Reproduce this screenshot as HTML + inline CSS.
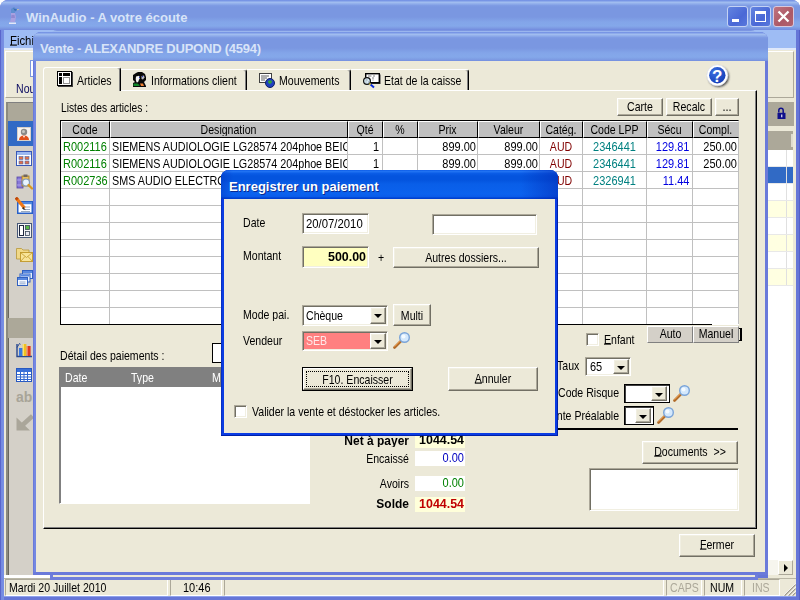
<!DOCTYPE html>
<html lang="fr">
<head>
<meta charset="utf-8">
<title>WinAudio - A votre écoute</title>
<style>
*{box-sizing:border-box;margin:0;padding:0}
html,body{width:800px;height:600px;overflow:hidden;background:#fff}
body{position:relative;font-family:"Liberation Sans",sans-serif;font-size:11px;color:#000}
.a{position:absolute}
.t{position:absolute;white-space:nowrap;font-size:11px;line-height:14px;height:14px;transform:scale(.96,1.13);transform-origin:0 50%}
.tr{text-align:right;transform-origin:100% 50%}
.tc{text-align:center;transform-origin:50% 50%}
.n{transform:scale(1,1.13)}
.b{transform:scale(1.09,1.13)}
.b.n{transform:scale(1.13,1.13)}
.b{font-weight:bold}
u{text-decoration:underline;text-underline-offset:.4px;text-decoration-thickness:1px}
.cap{position:absolute;white-space:nowrap;font-weight:bold;font-size:13px;line-height:16px;color:#d8e4f8}
.sunk{position:absolute;border:1px solid;border-color:#aca899 #fff #fff #aca899;box-shadow:inset 1px 1px 0 #716f64,inset -1px -1px 0 #f1efe2;background:#fff}
.btn{position:absolute;border:1px solid;border-color:#fff #716f64 #716f64 #fff;box-shadow:inset -1px -1px 0 #aca899,inset 1px 1px 0 #f1efe2;background:#ece9d8}
.dd{position:absolute;width:16px;border:1px solid;border-color:#fff #716f64 #716f64 #fff;box-shadow:inset -1px -1px 0 #aca899,inset 1px 1px 0 #f1efe2;background:#ece9d8}
.dd:after{content:"";position:absolute;left:3px;top:6px;border:4px solid transparent;border-top-color:#000;border-bottom:0}
.hl{position:absolute;height:1px;background:#c0c0c0}
.vl{position:absolute;width:1px;background:#c0c0c0}
.hc{position:absolute;top:121px;height:17px;background:#c0c0c0;border:1px solid;border-color:#fff #000 #000 #fff}
</style>
</head>
<body>
<!-- ================= MAIN WINDOW ================= -->
<div class="a" id="mainframe" style="left:0;top:0;width:800px;height:600px;background:#6676d7;border-radius:8px 8px 0 0"></div>
<div class="a" style="left:0;top:20px;width:4px;height:580px;background:linear-gradient(to right,#5a66cc 0,#5a66cc 1px,#758ae1 1.500px,#7890e4 4px)"></div>
<div class="a" style="left:4px;top:596px;width:792px;height:1px;background:#8fa2ec"></div>
<div class="a" style="left:799px;top:20px;width:1px;height:580px;background:#5560c8"></div>
<div class="a" id="maintitle" style="left:0;top:0;width:800px;height:30px;border-radius:8px 8px 0 0;background:linear-gradient(to bottom,#6c8ae2 0,#8eabeb 1.500px,#a0bcef 2.500px,#94b1ec 3.500px,#7f9ce4 5.500px,#7a97e1 7px,#7a97e1 17px,#83a5e9 22px,#84a8ea 26px,#7d9be3 28px,#718ade 30px)"></div>
<div class="cap" style="left:26px;top:9.5px">WinAudio - A votre écoute</div>
<!-- app icon -->
<svg class="a" style="left:8px;top:7px" width="12" height="18" viewBox="0 0 12 18"><path d="M3 2l3-2 2 1.500 3 .500-2.500 2-1.500 1v2l-4 0z" fill="#5f8fd0"/><path d="M5 1l2 1 2 .500-2 1.500z" fill="#3868b0"/><path d="M9 2l2.500 .2-2 1.300z" fill="#d8c8a0"/><path d="M3 6h4l1 4-1 5h-5l1-4z" fill="#a8a0e0"/><path d="M3.500 8h3l.5 3h-4z" fill="#9088d0"/><path d="M1 15.500h7v1.500H1z" fill="#e4e8f8"/></svg>
<!-- caption buttons -->
<div class="a" style="left:727px;top:6px;width:21px;height:21px;border:1px solid #c4d2f4;border-radius:3px;background:linear-gradient(135deg,#6384e0,#4a68d6 60%,#5878dc)"></div>
<div class="a" style="left:732px;top:18.500px;width:7px;height:3px;background:#fff"></div>
<div class="a" style="left:750px;top:6px;width:21px;height:21px;border:1px solid #c4d2f4;border-radius:3px;background:linear-gradient(135deg,#6384e0,#4a68d6 60%,#5878dc)"></div>
<div class="a" style="left:755px;top:11px;width:11px;height:11px;border:1px solid #fff;border-top-width:3px"></div>
<div class="a" style="left:773px;top:6px;width:21px;height:21px;border:1px solid #d8c8dc;border-radius:3px;background:linear-gradient(135deg,#c07480,#ac5866 60%,#b2626e)"></div>
<svg class="a" style="left:773px;top:6px" width="21" height="21"><path d="M5.500 5.500l10 10M15.500 5.500l-10 10" stroke="#fff" stroke-width="2.300" fill="none"/></svg>
<!-- menu bar -->
<div class="a" style="left:4px;top:30px;width:792px;height:19px;background:#9ebcf4"></div>
<div class="a" style="left:4px;top:48px;width:792px;height:2px;background:#dfe8fa"></div>
<div class="t" style="left:10px;top:32.500px;transform:scale(1.03,1.13)"><u>F</u>ichier</div>
<!-- toolbar -->
<div class="a" style="left:4px;top:50px;width:792px;height:53px;background:#ece9d8"></div>
<div class="a" style="left:5px;top:51px;width:789px;height:47px;border:1px solid;border-color:#fff #aca899 #aca899 #fff"></div>
<div class="a" style="left:30px;top:60px;width:12px;height:17px;border:1px solid #7a96df;background:#fff"></div>
<div class="t" style="left:16px;top:80.500px;color:#0a0a60">Nouveau</div>
<!-- left pane -->
<div class="a" style="left:4px;top:98px;width:30px;height:480px;background:#ece9d8"></div>
<div class="a" style="left:6px;top:102px;width:31px;height:473px;background:#d4d0c8;border-left:2px solid #716f64;border-left-color:#8c8a7e;border-top:1px solid #808080;box-shadow:inset 1px 0 0 #6a685e"></div>
<div class="a" style="left:4px;top:575px;width:50px;height:3px;background:#fff"></div>
<div class="a" style="left:8px;top:103px;width:30px;height:18px;background:#aca899"></div>
<div class="a" style="left:8px;top:121px;width:30px;height:25px;background:#316ac5"></div>
<div class="a" style="left:8px;top:318px;width:30px;height:20px;background:#aca899"></div>

<!-- left pane icons -->
<svg class="a" style="left:17px;top:127px" width="14" height="14" viewBox="0 0 14 14"><rect width="14" height="14" fill="#fff"/><rect x="0.500" y="0.500" width="13" height="13" fill="#f8f4f0" stroke="#d8d0c8"/><circle cx="7" cy="5" r="3.200" fill="#8a8a88"/><circle cx="6.500" cy="4.500" r="1.500" fill="#c8c8c4"/><path d="M2 13c0-3 2-4.500 5-4.500s5 1.500 5 4.500z" fill="#e0501c"/><path d="M6 9l1 2 1-2z" fill="#fff"/></svg>
<svg class="a" style="left:16px;top:151px" width="16" height="15" viewBox="0 0 16 15"><rect x="0.500" y="0.500" width="15" height="14" fill="#fff" stroke="#3858b8"/><rect x="1" y="1" width="14" height="3" fill="#9cb8f0"/><rect x="3" y="5.500" width="4" height="3" fill="#e07048" stroke="#4868b0" stroke-width=".6"/><rect x="9" y="5.500" width="4" height="3" fill="#e07048" stroke="#4868b0" stroke-width=".6"/><rect x="3" y="10" width="4" height="3" fill="#e07048" stroke="#4868b0" stroke-width=".6"/><rect x="9" y="10" width="4" height="3" fill="#e07048" stroke="#4868b0" stroke-width=".6"/></svg>
<svg class="a" style="left:16px;top:174px" width="17" height="16" viewBox="0 0 17 16"><rect x="1" y="3" width="6" height="11" fill="#8878d8" stroke="#5848a8" stroke-width=".8"/><path d="M1 6h6M1 11h6" stroke="#b8b0f0" stroke-width=".8"/><rect x="6" y="2" width="7" height="10" fill="#e8c060" stroke="#a07820" stroke-width=".8"/><rect x="7.500" y="0.500" width="4" height="2.500" fill="#706860"/><circle cx="10" cy="8.500" r="3.500" fill="#e8f4ff" stroke="#8098b8" stroke-width="1.200"/><path d="M12.500 11l3.500 3.500" stroke="#d89820" stroke-width="2.200" stroke-linecap="round"/></svg>
<svg class="a" style="left:15px;top:197px" width="18" height="17" viewBox="0 0 18 17"><rect x="2.750" y="4.750" width="14.500" height="11.500" fill="#fff" stroke="#2860c8" stroke-width="1.500"/><rect x="3" y="5" width="14" height="2.200" fill="#5088e0"/><path d="M8 10h7M8 12.500h7M6 14.500h9" stroke="#90a0b8" stroke-width=".9"/><path d="M1.500 1.500L9.500 11" stroke="#f07818" stroke-width="3.200" stroke-linecap="butt"/><path d="M8.300 9.800l2.600 3.400-3.900-1.700z" fill="#403020"/><path d="M0.800 0.600l1.800 2" stroke="#c04808" stroke-width="3"/></svg>
<svg class="a" style="left:17px;top:223px" width="15" height="15" viewBox="0 0 15 15"><rect x="0.500" y="0.500" width="14" height="14" fill="#f4f4f4" stroke="#485878"/><rect x="2.500" y="2.500" width="4" height="10" fill="#fff" stroke="#202840"/><rect x="8.500" y="2.500" width="4" height="4" fill="#58b848" stroke="#384858" stroke-width=".8"/><rect x="8.500" y="8.500" width="4" height="4" fill="#e8e8f0" stroke="#384858" stroke-width=".8"/></svg>
<svg class="a" style="left:16px;top:246px" width="17" height="17" viewBox="0 0 17 17"><path d="M0.500 2.500h5l1.500 1.500h6v9h-12.500z" fill="#f0d888" stroke="#b89838" stroke-width=".8"/><rect x="4.500" y="6.500" width="12" height="9" fill="#f8e498" stroke="#c09828" stroke-width=".9"/><path d="M4.500 6.500l6 5 6-5M4.500 15.500l4.500-5M16.500 15.500l-4.500-5" stroke="#c09828" stroke-width=".8" fill="none"/></svg>
<svg class="a" style="left:17px;top:270px" width="16" height="16" viewBox="0 0 16 16"><rect x="5.500" y="0.500" width="10" height="8" fill="#e8f0fc" stroke="#3060c0"/><rect x="6" y="1" width="9" height="2" fill="#5888e0"/><rect x="3" y="4" width="10" height="8" fill="#e8f0fc" stroke="#3060c0"/><rect x="3.500" y="4.500" width="9" height="2" fill="#5888e0"/><rect x="0.500" y="7.500" width="10" height="8" fill="#f4f8ff" stroke="#3060c0"/><rect x="1" y="8" width="9" height="2" fill="#5888e0"/><path d="M2.500 12h6M2.500 13.800h6" stroke="#8098c0" stroke-width=".8"/></svg>
<svg class="a" style="left:16px;top:342px" width="17" height="16" viewBox="0 0 17 16"><path d="M1 2v12.500h15" stroke="#284890" stroke-width="1.400" fill="none"/><path d="M1 5.500l2.500-4 1 .8" stroke="#284890" stroke-width="1" fill="none"/><rect x="3" y="6" width="3.600" height="8" fill="#3878e0"/><rect x="6.800" y="2" width="3.600" height="12" fill="#f0c020"/><rect x="6.800" y="2" width="1.200" height="12" fill="#f8e070"/><rect x="10.800" y="4" width="3.800" height="10" fill="#e03820"/><rect x="10.800" y="4" width="1.200" height="10" fill="#f08060"/></svg>
<svg class="a" style="left:16px;top:368px" width="16" height="14" viewBox="0 0 16 14"><rect x="0.500" y="0.500" width="15" height="13" fill="#fff" stroke="#2858c0"/><rect x="1" y="1" width="14" height="3" fill="#3870d8"/><path d="M1 6.500h14M1 9h14M1 11.500h14M4.500 4v9.500M8 4v9.500M11.500 4v9.500" stroke="#3068d0" stroke-width="1"/></svg>
<div class="t b" style="left:16px;top:390px;color:#a8a498;font-size:14px;transform:none;letter-spacing:0">ab|</div>
<svg class="a" style="left:16px;top:414px" width="18" height="17" viewBox="0 0 18 17"><path d="M16.500 2L6 11.500" stroke="#aaa69a" stroke-width="4.600"/><path d="M0.500 3.500v13h13.500z" fill="#aaa69a"/></svg>
<!-- right strip (main window content behind) -->
<div class="a" style="left:768px;top:98px;width:28px;height:480px;background:#ece9d8"></div>
<div class="a" style="left:768px;top:102px;width:26px;height:24px;background:#aca899"></div>
<div class="a" style="left:768px;top:131px;width:25px;height:443px;background:#fff"></div>
<div class="a" style="left:768px;top:131px;width:25px;height:19px;background:#aca899"></div>
<div class="a" style="left:768px;top:166px;width:25px;height:17px;background:#316ac5"></div>
<div class="a" style="left:768px;top:200px;width:25px;height:17px;background:#ffffe1"></div>
<div class="a" style="left:768px;top:234px;width:25px;height:17px;background:#ffffe1"></div>
<div class="a" style="left:768px;top:268px;width:25px;height:17px;background:#ffffe1"></div>
<div class="a" style="left:786px;top:150px;width:1px;height:135px;background:#e0e0e0"></div>
<div class="a" style="left:768px;top:166px;width:25px;height:1px;background:#e8e8e8"></div>
<div class="a" style="left:768px;top:183px;width:25px;height:1px;background:#e8e8e8"></div>
<div class="a" style="left:768px;top:200px;width:25px;height:1px;background:#e8e8e8"></div>
<div class="a" style="left:768px;top:217px;width:25px;height:1px;background:#e8e8e8"></div>
<div class="a" style="left:768px;top:234px;width:25px;height:1px;background:#e8e8e8"></div>
<div class="a" style="left:768px;top:251px;width:25px;height:1px;background:#e8e8e8"></div>
<div class="a" style="left:768px;top:268px;width:25px;height:1px;background:#e8e8e8"></div>
<div class="a" style="left:768px;top:285px;width:25px;height:1px;background:#e8e8e8"></div>
<div class="a" style="left:791px;top:134px;width:2px;height:13px;background:#e0ddd0"></div>
<svg class="a" style="left:776px;top:107px" width="11" height="13" viewBox="0 0 11 13"><path d="M2.800 5.500V3.500a2.200 2.200 0 0 1 4.400 0v2.500" stroke="#10108a" stroke-width="1.500" fill="none"/><rect x="1.500" y="5.800" width="8" height="6.200" fill="#10108a"/><rect x="5" y="7.500" width="1.400" height="2.800" fill="#c8c8e8"/></svg>
<div class="a" style="left:768px;top:560px;width:10px;height:15px;background:#f6f5ee"></div>
<div class="a" style="left:778px;top:560px;width:15px;height:15px;background:#ece9d8;border:1px solid;border-color:#fff #aca899 #aca899 #fff"></div>
<div class="a" style="left:783.500px;top:563.500px;width:0;height:0;border:4px solid transparent;border-left:4.500px solid #000;border-right:0"></div>
<div class="a" style="left:768px;top:575px;width:28px;height:3px;background:#ece9d8"></div>
<!-- status bar -->
<div class="a" style="left:4px;top:578px;width:792px;height:18px;background:#ece9d8;border-top:1px solid #bab7a6"></div>
<div class="a" style="left:5px;top:579px;width:163px;height:17px;border:1px solid;border-color:#aca899 #fff #fff #aca899"></div>
<div class="a" style="left:170px;top:579px;width:52px;height:17px;border:1px solid;border-color:#aca899 #fff #fff #aca899"></div>
<div class="a" style="left:224px;top:579px;width:440px;height:17px;border:1px solid;border-color:#aca899 #fff #fff #aca899"></div>
<div class="a" style="left:666px;top:579px;width:36px;height:17px;border:1px solid;border-color:#aca899 #fff #fff #aca899"></div>
<div class="a" style="left:704px;top:579px;width:38px;height:17px;border:1px solid;border-color:#aca899 #fff #fff #aca899"></div>
<div class="a" style="left:744px;top:579px;width:36px;height:17px;border:1px solid;border-color:#aca899 #fff #fff #aca899"></div>
<svg class="a" style="left:783px;top:583px" width="13" height="13"><path d="M12.500 1.500L1.500 12.500M12.500 5.500L5.500 12.500M12.500 9.500L9.500 12.500" stroke="#a09c8c" stroke-width="1.500"/><path d="M12.500 0.500L0.500 12.500M12.500 4.500L4.500 12.500M12.500 8.500L8.500 12.500" stroke="#fff" stroke-width=".8"/></svg>
<div class="t" style="left:9px;top:580px">Mardi 20 Juillet 2010</div>
<div class="t n" style="left:183px;top:580px">10:46</div>
<div class="t" style="left:670px;top:580px;color:#aca899">CAPS</div>
<div class="t" style="left:710px;top:580px">NUM</div>
<div class="t" style="left:752px;top:580px;color:#aca899">INS</div>

<!-- ================= WINDOW BEHIND ================= -->
<div class="a" style="left:50px;top:30px;width:708px;height:550px;background:linear-gradient(to bottom,#6c86dc 0,#9ab6ee 1.500px,#9ab6ee 3px,#6e7edb 4px);border-radius:7px 7px 0 0"></div>
<div class="a" style="left:53px;top:560px;width:702px;height:17px;background:#ece9d8"></div>

<!-- ================= VENTE WINDOW ================= -->
<div class="a" id="vente" style="left:33px;top:32px;width:735px;height:543px;background:#6a7ada;border-radius:8px 8px 0 0"></div>
<div class="a" style="left:34px;top:50px;width:2px;height:522px;background:#7488e2"></div>
<div class="a" style="left:33px;top:32px;width:735px;height:29px;border-radius:8px 8px 0 0;background:linear-gradient(to bottom,#6c8ae2 0,#8eabeb 1.500px,#a0bcef 2.500px,#94b1ec 3.500px,#7f9ce4 5.500px,#7a97e1 7px,#7a97e1 16px,#83a5e9 21px,#84a8ea 25px,#7d9be3 27.500px,#758fe0 29px)"></div>
<div class="cap" style="left:40px;top:40.500px;letter-spacing:-0.22px">Vente - ALEXANDRE DUPOND (4594)</div>
<div class="a" id="vclient" style="left:36px;top:61px;width:729px;height:511px;background:#ece9d8"></div>

<!-- tab page -->
<div class="a" style="left:43px;top:90px;width:714px;height:439px;border:1px solid;border-color:#fff #000 #000 #fff;box-shadow:inset -1px -1px 0 #808080"></div>
<!-- tabs -->
<div class="a" style="left:43px;top:67px;width:78px;height:24px;background:#ece9d8;border:1px solid;border-color:#fff #000 transparent #fff;border-bottom:0;border-radius:3px 3px 0 0;box-shadow:inset -1px 0 0 #808080"></div>
<div class="a" style="left:121px;top:69px;width:126px;height:21px;border:1px solid;border-color:#fff #000 transparent transparent;border-bottom:0;border-left:0;border-radius:0 3px 0 0;box-shadow:inset -1px 0 0 #808080"></div>
<div class="a" style="left:247px;top:69px;width:104px;height:21px;border:1px solid;border-color:#fff #000 transparent transparent;border-bottom:0;border-left:0;border-radius:0 3px 0 0;box-shadow:inset -1px 0 0 #808080"></div>
<div class="a" style="left:351px;top:69px;width:118px;height:21px;border:1px solid;border-color:#fff #000 transparent transparent;border-bottom:0;border-left:0;border-radius:0 3px 0 0;box-shadow:inset -1px 0 0 #808080"></div>
<div class="t" style="left:77px;top:72.5px">Articles</div>
<div class="t" style="left:151px;top:73px">Informations client</div>
<div class="t" style="left:279px;top:73px">Mouvements</div>
<div class="t" style="left:384px;top:73px">Etat de la caisse</div>
<!-- tab icons -->
<svg class="a" style="left:57px;top:71px" width="17" height="17" viewBox="0 0 17 17" shape-rendering="crispEdges"><rect x="15" y="1" width="1" height="15" fill="#404040"/><rect x="1" y="15" width="15" height="1" fill="#404040"/><rect width="15" height="15" fill="#000"/><rect x="1" y="1" width="13" height="13" fill="#fff"/><rect x="2" y="2" width="3" height="3" fill="#000"/><rect x="6" y="2" width="7" height="3" fill="#000"/><rect x="2" y="6" width="3" height="7" fill="#000"/><rect x="6" y="6" width="7" height="7" fill="#909090"/><rect x="7" y="7" width="5" height="5" fill="#fff"/></svg>
<svg class="a" style="left:132px;top:71px" width="16" height="17" viewBox="0 0 16 17"><path d="M1 4l3-2 2-1h4l3 2 1 3v3l-2 2 2 4 0 1H1v-4l2-1-2-2z" fill="#080808"/><path d="M4 5.500l3-.8 1 2 -1 2 -1 2.500h-1.500l-.8-3z" fill="#f4f4f4"/><path d="M9.500 5l2.500-.5.500 2-1.500 2-1.500-.5z" fill="#b8b8c0"/><rect x="7" y="6" width="1" height="1" fill="#2030c0"/><rect x="10" y="5" width="1" height="1" fill="#2030c0"/><path d="M1.500 12.500h4l2 1.500v1H1.500z" fill="#108828"/><path d="M8 12.500h3l1 2.500h-3z" fill="#f08030"/></svg>
<svg class="a" style="left:259px;top:72px" width="17" height="16" viewBox="0 0 17 16"><rect x="0.5" y="1.5" width="12" height="9" fill="#fff" stroke="#404040"/><path d="M2 4h8M2 6h6M2 8h4" stroke="#606060"/><circle cx="11" cy="11" r="4.5" fill="#2040c0" stroke="#102060"/><path d="M9 9c1-1 3-1 4 0 0 2-1 2-2 3-1 0-2-1-2-3z" fill="#30a040"/></svg>
<svg class="a" style="left:362px;top:72px" width="19" height="17" viewBox="0 0 19 17"><rect x="4.500" y="2.500" width="14" height="9.500" fill="#303030"/><rect x="3.700" y="1.700" width="13.600" height="9" fill="#fff" stroke="#000" stroke-width="1.400"/><path d="M6 4h3.500M11 4h2M10 6h2M10.500 8h1" stroke="#808080" stroke-width="1"/><circle cx="5" cy="9" r="3.400" fill="#d8ecf8" stroke="#101010" stroke-width="1.200"/><path d="M3.500 8h2M3.500 10h1M6 10h1.500" stroke="#909090" stroke-width=".9"/><path d="M8 12l4 3.500" stroke="#0828d8" stroke-width="2"/><rect x="7.300" y="11.300" width="1.500" height="1.500" fill="#f0d820"/></svg>
<!-- help icon -->
<svg class="a" style="left:704px;top:62px" width="28" height="28" viewBox="0 0 28 28"><defs><radialGradient id="hg" cx="0.35" cy="0.3" r="0.9"><stop offset="0" stop-color="#3c70e0"/><stop offset="1" stop-color="#0c34b0"/></radialGradient><filter id="hb" x="-20%" y="-20%" width="140%" height="140%"><feGaussianBlur stdDeviation="0.8"/></filter></defs><circle cx="14.600" cy="14.800" r="10.300" fill="#404040" filter="url(#hb)"/><circle cx="13.300" cy="13.300" r="10.500" fill="#fff" stroke="#dfe3ee" stroke-width=".8"/><circle cx="13.300" cy="13.300" r="8.200" fill="url(#hg)"/><text x="13.300" y="19.500" font-family="Liberation Sans,sans-serif" font-weight="bold" font-size="17" fill="#fff" text-anchor="middle">?</text></svg>
<div class="t" style="left:61px;top:100px;transform:scale(.93,1.13)">Listes des articles :</div>
<!-- top buttons -->
<div class="btn" style="left:617px;top:98px;width:46px;height:18px"></div><div class="t tc" style="left:617px;top:99px;width:46px">Carte</div>
<div class="btn" style="left:666px;top:98px;width:46px;height:18px"></div><div class="t tc" style="left:666px;top:99px;width:46px">Recalc</div>
<div class="btn" style="left:715px;top:98px;width:24px;height:18px"></div><div class="t tc n" style="left:715px;top:99px;width:24px">...</div>
<!-- grid -->
<div class="a" style="left:60px;top:120px;width:679px;height:205px;background:#fff;border:1px solid #000;border-right-color:#c0c0c0"></div>
<div class="hc" style="left:61px;width:49px"></div><div class="t tc" style="left:61px;top:122px;width:48px">Code</div>
<div class="hc" style="left:110px;width:238px"></div><div class="t tc" style="left:110px;top:122px;width:237px">Designation</div>
<div class="hc" style="left:348px;width:35px"></div><div class="t tc" style="left:348px;top:122px;width:34px">Qté</div>
<div class="hc" style="left:383px;width:35px"></div><div class="t tc" style="left:383px;top:122px;width:34px">%</div>
<div class="hc" style="left:418px;width:60px"></div><div class="t tc" style="left:418px;top:122px;width:59px">Prix</div>
<div class="hc" style="left:478px;width:62px"></div><div class="t tc" style="left:478px;top:122px;width:61px">Valeur</div>
<div class="hc" style="left:540px;width:43px"></div><div class="t tc" style="left:540px;top:122px;width:42px">Catég.</div>
<div class="hc" style="left:583px;width:64px"></div><div class="t tc" style="left:583px;top:122px;width:63px">Code LPP</div>
<div class="hc" style="left:647px;width:46px"></div><div class="t tc" style="left:647px;top:122px;width:45px">Sécu</div>
<div class="hc" style="left:693px;width:46px;border-right-color:#c0c0c0"></div><div class="t tc" style="left:693px;top:122px;width:45px">Compl.</div>
<div class="hl" style="left:61px;top:154px;width:677px"></div>
<div class="hl" style="left:61px;top:171px;width:677px"></div>
<div class="hl" style="left:61px;top:188px;width:677px"></div>
<div class="hl" style="left:61px;top:205px;width:677px"></div>
<div class="hl" style="left:61px;top:222px;width:677px"></div>
<div class="hl" style="left:61px;top:239px;width:677px"></div>
<div class="hl" style="left:61px;top:256px;width:677px"></div>
<div class="hl" style="left:61px;top:273px;width:677px"></div>
<div class="hl" style="left:61px;top:290px;width:677px"></div>
<div class="hl" style="left:61px;top:307px;width:677px"></div>
<div class="vl" style="left:109px;top:138px;height:186px"></div>
<div class="vl" style="left:347px;top:138px;height:186px"></div>
<div class="vl" style="left:382px;top:138px;height:186px"></div>
<div class="vl" style="left:417px;top:138px;height:186px"></div>
<div class="vl" style="left:477px;top:138px;height:186px"></div>
<div class="vl" style="left:539px;top:138px;height:186px"></div>
<div class="vl" style="left:582px;top:138px;height:186px"></div>
<div class="vl" style="left:646px;top:138px;height:186px"></div>
<div class="vl" style="left:692px;top:138px;height:186px"></div>
<div class="t n" style="left:63px;top:139px;color:#008000">R002116</div><div class="t" style="left:112px;top:139px;width:240px;overflow:hidden;transform:scale(.979,1.13)">SIEMENS AUDIOLOGIE LG28574 204phoe BEIG</div><div class="t tr n" style="left:348px;top:139px;width:31px">1</div><div class="t tr n" style="left:417px;top:139px;width:59px">899.00</div><div class="t tr n" style="left:478px;top:139px;width:60px">899.00</div><div class="t tc" style="left:540px;top:139px;width:42px;color:#800000">AUD</div><div class="t tc n" style="left:583px;top:139px;width:63px;color:#008080">2346441</div><div class="t tr n" style="left:647px;top:139px;width:42.500px;color:#0000e0">129.81</div><div class="t tr n" style="left:693px;top:139px;width:44px">250.00</div>
<div class="t n" style="left:63px;top:156px;color:#008000">R002116</div><div class="t" style="left:112px;top:156px;width:240px;overflow:hidden;transform:scale(.979,1.13)">SIEMENS AUDIOLOGIE LG28574 204phoe BEIG</div><div class="t tr n" style="left:348px;top:156px;width:31px">1</div><div class="t tr n" style="left:417px;top:156px;width:59px">899.00</div><div class="t tr n" style="left:478px;top:156px;width:60px">899.00</div><div class="t tc" style="left:540px;top:156px;width:42px;color:#800000">AUD</div><div class="t tc n" style="left:583px;top:156px;width:63px;color:#008080">2346441</div><div class="t tr n" style="left:647px;top:156px;width:42.500px;color:#0000e0">129.81</div><div class="t tr n" style="left:693px;top:156px;width:44px">250.00</div>
<div class="t n" style="left:63px;top:173px;color:#008000">R002736</div><div class="t" style="left:112px;top:173px;width:240px;overflow:hidden;transform:scale(.979,1.13)">SMS AUDIO ELECTRONIQUE</div><div class="t tc" style="left:540px;top:173px;width:42px;color:#800000">AUD</div><div class="t tc n" style="left:583px;top:173px;width:63px;color:#008080">2326941</div><div class="t tr n" style="left:647px;top:173px;width:42.500px;color:#0000e0">11.44</div>

<!-- Auto / Manuel -->
<div class="a" style="left:647px;top:326px;width:46px;height:17px;background:#d4d0c8;border:1px solid;border-color:#fff #808080 #808080 #fff"></div><div class="t tc" style="left:648px;top:326px;width:45px">Auto</div>
<div class="a" style="left:693px;top:326px;width:46px;height:17px;background:#d4d0c8;border:1px solid;border-color:#fff #808080 #808080 #fff"></div><div class="t tc" style="left:693px;top:326px;width:46px">Manuel</div>
<div class="a" style="left:740px;top:328px;width:2px;height:13px;background:#000"></div><div class="a" style="left:739px;top:328px;width:1px;height:1px;background:#000"></div><div class="a" style="left:739px;top:340px;width:1px;height:1px;background:#000"></div><div class="a" style="left:712px;top:324px;width:27px;height:1px;background:#fff"></div>
<!-- Enfant -->
<div class="sunk" style="left:586px;top:333px;width:13px;height:13px"></div>
<div class="t" style="left:604px;top:332px"><u>E</u>nfant</div>
<!-- Taux -->
<div class="t" style="left:556.5px;top:358px">Taux</div>
<div class="sunk" style="left:585px;top:357px;width:46px;height:19px"></div><div class="dd" style="left:613px;top:359px;height:15px"></div>
<div class="t n" style="left:590px;top:359px">65</div>
<div class="t" style="left:558px;top:385px">Code Risque</div>
<div class="sunk" style="left:624px;top:384px;width:46px;height:19px;border-color:#000;box-shadow:inset 1px 1px 0 #404040"></div><div class="dd" style="left:651px;top:386px;height:15px"></div>
<div class="t tr" style="left:520px;top:408px;width:99px">Entente Préalable</div>
<div class="sunk" style="left:624px;top:406px;width:30px;height:19px;border-color:#000;box-shadow:inset 1px 1px 0 #404040"></div><div class="dd" style="left:635px;top:408px;height:15px"></div>
<div class="a" style="left:557px;top:428px;width:181px;height:2px;background:#000;border-bottom:1px solid rgba(0,0,0,.35)"></div>
<div class="btn" style="left:642px;top:441px;width:96px;height:23px"></div><div class="t tc" style="left:642px;top:444px;width:96px"><u>D</u>ocuments &nbsp;&gt;&gt;</div>
<div class="sunk" style="left:589px;top:468px;width:150px;height:43px"></div>
<div class="btn" style="left:679px;top:534px;width:76px;height:23px"></div><div class="t tc" style="left:679px;top:537px;width:76px"><u>F</u>ermer</div>
<!-- payments -->
<div class="t" style="left:60px;top:347.5px">Détail des paiements :</div>
<div class="a" style="left:212px;top:343px;width:30px;height:20px;background:#fff;border:1px solid #000"></div>
<div class="sunk" style="left:59px;top:367px;width:251px;height:137px;border-color:#808080 #fff #fff #808080;box-shadow:inset 1px 1px 0 #808080"></div>
<div class="a" style="left:61px;top:369px;width:248px;height:18px;background:#808080"></div>
<div class="t" style="left:65px;top:370px;color:#fff">Date</div>
<div class="t" style="left:131px;top:370px;color:#fff">Type</div>
<div class="t" style="left:212px;top:370px;color:#fff">Montant</div>
<!-- totals -->
<div class="t tr b" style="left:320px;top:433px;width:89px">Net à payer</div>
<div class="a" style="left:415px;top:434px;width:50px;height:14px;background:#ffffda"></div><div class="t tr b n" style="left:415px;top:432px;width:49px">1044.54</div>
<div class="t tr" style="left:320px;top:451px;width:89px">Encaissé</div>
<div class="a" style="left:415px;top:451px;width:50px;height:15px;background:#fff"></div><div class="t tr n" style="left:415px;top:450px;width:49px;color:#0000c0">0.00</div>
<div class="t tr" style="left:320px;top:476px;width:89px">Avoirs</div>
<div class="a" style="left:415px;top:476px;width:50px;height:15px;background:#fff"></div><div class="t tr n" style="left:415px;top:475px;width:49px;color:#008000">0.00</div>
<div class="t tr b" style="left:320px;top:496px;width:89px">Solde</div>
<div class="a" style="left:415px;top:497px;width:50px;height:15px;background:#ffffda"></div><div class="t tr b n" style="left:415px;top:496px;width:49px;color:#c00000">1044.54</div>

<!-- ================= DIALOG ================= -->
<div class="a" id="dlg" style="left:221px;top:170px;width:337px;height:266px;background:#0a3ce4;border-radius:8px 8px 0 0;box-shadow:inset -1px -1px 0 #0020a8,inset 1px 0 0 #0830c0"></div>
<div class="a" style="left:221px;top:170px;width:337px;height:29px;border-radius:8px 8px 0 0;background:linear-gradient(to bottom,#0e5ee8 0,#2072f2 1.500px,#0a5ce6 3.500px,#0454de 6px,#0454de 10px,#095ee8 14px,#0b62ee 24px,#0a5cea 26.500px,#0044d4 28px,#003ccc 29px)"></div>
<div class="a" style="left:221px;top:170px;width:337px;height:29px;border-radius:8px 8px 0 0;background:linear-gradient(to right,rgba(0,40,180,.35) 0,rgba(0,40,180,0) 12px,rgba(0,30,160,0) 300px,rgba(0,30,170,.45) 337px)"></div>
<div class="cap" style="left:229px;top:179px;color:#fff;text-shadow:1px 1px 0 #0a2a90">Enregistrer un paiement</div>
<div class="a" style="left:224px;top:199px;width:331px;height:234px;background:#ece9d8"></div>
<div class="t" style="left:242.5px;top:214.500px">Date</div>
<div class="sunk" style="left:302px;top:213px;width:67px;height:21px"></div><div class="t n" style="left:306px;top:216px;transform:scale(1.03,1.13)">20/07/2010</div>
<div class="sunk" style="left:432px;top:214px;width:105px;height:21px"></div>
<div class="t" style="left:242.5px;top:248px">Montant</div>
<div class="sunk" style="left:302px;top:246px;width:67px;height:22px;background:#ffffc0"></div><div class="t tr b n" style="left:304px;top:249px;width:62px">500.00</div>
<div class="t" style="left:378px;top:250px">+</div>
<div class="btn" style="left:393px;top:247px;width:146px;height:21px"></div><div class="t tc" style="left:393px;top:250px;width:146px">Autres dossiers...</div>
<div class="t" style="left:243px;top:307px">Mode pai.</div>
<div class="sunk" style="left:302px;top:305px;width:86px;height:21px"></div><div class="dd" style="left:370px;top:307px;height:17px"></div><div class="t" style="left:306px;top:308px">Chèque</div>
<div class="btn" style="left:393px;top:304px;width:38px;height:22px"></div><div class="t tc" style="left:393px;top:308px;width:38px">Multi</div>
<div class="t" style="left:243px;top:333px">Vendeur</div>
<div class="sunk" style="left:302px;top:331px;width:86px;height:20px;background:#ff8080"></div><div class="dd" style="left:370px;top:333px;height:16px"></div><div class="t" style="left:306px;top:333px;color:#ffe8e8">SEB</div>
<div class="a" style="left:302px;top:367px;width:111px;height:24px;border:1px solid #000"></div>
<div class="btn" style="left:303px;top:368px;width:109px;height:22px"></div>
<div class="a" style="left:306px;top:371px;width:103px;height:16px;border:1px dotted #000"></div>
<div class="t tc" style="left:303px;top:372px;width:109px">F10. Encaisser</div>
<div class="btn" style="left:448px;top:367px;width:90px;height:24px"></div><div class="t tc" style="left:448px;top:371px;width:90px"><u>A</u>nnuler</div>
<div class="sunk" style="left:234px;top:405px;width:13px;height:13px"></div>
<div class="t" style="left:252px;top:404px">Valider la vente et déstocker les articles.</div>

<!-- magnifiers -->
<svg class="a" style="left:393px;top:332px" width="18" height="17" viewBox="0 0 18 17"><path d="M8.500 8.500L1.500 15.500" stroke="#b06a28" stroke-width="2.600" stroke-linecap="round"/><path d="M8 8.200L1.800 14.400" stroke="#f0a050" stroke-width="1" stroke-linecap="round"/><circle cx="11.500" cy="5.500" r="4.800" fill="#d4e8fc" stroke="#7aa4d8" stroke-width="1.400"/><circle cx="10.500" cy="4.500" r="2" fill="#f4faff"/></svg>
<svg class="a" style="left:673px;top:385px" width="18" height="17" viewBox="0 0 18 17"><path d="M8.500 8.500L1.500 15.500" stroke="#b06a28" stroke-width="2.600" stroke-linecap="round"/><path d="M8 8.200L1.800 14.400" stroke="#f0a050" stroke-width="1" stroke-linecap="round"/><circle cx="11.500" cy="5.500" r="4.800" fill="#d4e8fc" stroke="#7aa4d8" stroke-width="1.400"/><circle cx="10.500" cy="4.500" r="2" fill="#f4faff"/></svg>
<svg class="a" style="left:657px;top:407px" width="18" height="17" viewBox="0 0 18 17"><path d="M8.500 8.500L1.500 15.500" stroke="#b06a28" stroke-width="2.600" stroke-linecap="round"/><path d="M8 8.200L1.800 14.400" stroke="#f0a050" stroke-width="1" stroke-linecap="round"/><circle cx="11.500" cy="5.500" r="4.800" fill="#d4e8fc" stroke="#7aa4d8" stroke-width="1.400"/><circle cx="10.500" cy="4.500" r="2" fill="#f4faff"/></svg>
</body>
</html>
